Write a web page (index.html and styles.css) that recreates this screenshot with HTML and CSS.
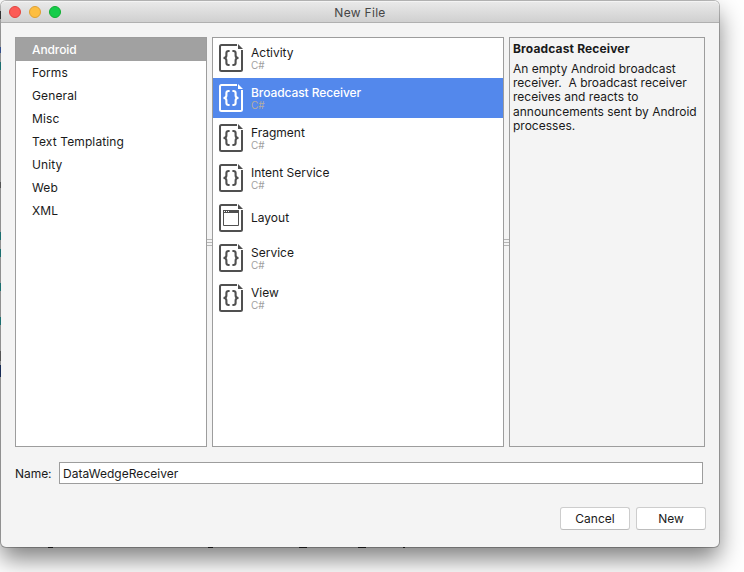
FILE: index.html
```
<!DOCTYPE html>
<html lang="en">
<head>
<meta charset="utf-8">
<title>New File</title>
<link rel="stylesheet" href="styles.css">
</head>
<body>
<svg class="symbols" aria-hidden="true">
  <symbol id="file" viewBox="0 0 24 28">
    <path d="M18 1H2.500Q1 1 1 2.500V25.500Q1 27 2.500 27H21.500Q23 27 23 25.500V6" fill="none" stroke="currentColor" stroke-width="2"/>
    <path d="M19 0L24 5H19Z" fill="currentColor"/>
  </symbol>
  <symbol id="code" viewBox="0 0 24 28">
    <use href="#file"/>
    <path d="M10.600 7H9.600Q7.400 7 7.400 9V11.500Q7.400 14 4.500 14Q7.400 14 7.400 16.500V19Q7.400 21 9.600 21H10.600M13.400 7H14.400Q16.600 7 16.600 9V11.500Q16.600 14 19.500 14Q16.600 14 16.600 16.500V19Q16.600 21 14.400 21H13.400" fill="none" stroke="currentColor" stroke-width="2.100"/>
  </symbol>
  <symbol id="layout" viewBox="0 0 24 28">
    <use href="#file"/>
    <path d="M4.500 6.500H19.500V21.500H4.500Z" fill="none" stroke="currentColor"/>
    <path d="M4 6H20V9H4Z" fill="currentColor"/>
    <path d="M5 7H6V8H5ZM7 7H8V8H7ZM9 7H10V8H9Z" fill="#fff"/>
  </symbol>
</svg>
<div class="backdrop">
  <i class="speck s1"></i><i class="speck s2"></i><i class="speck s3"></i><i class="speck s4"></i><i class="speck s5"></i><i class="speck s6"></i><i class="speck s7"></i><i class="speck s8"></i><i class="speck s9"></i><i class="speck s10"></i>
  <i class="dash d1"></i><i class="dash d2"></i><i class="dash d3"></i><i class="dash d4"></i><i class="dash d5"></i>
</div>
<main class="window">
  <header class="titlebar">
    <div class="lights"><span class="light red"></span><span class="light yellow"></span><span class="light green"></span></div>
    <span class="title">New File</span>
  </header>
  <div class="panes">
    <ul class="pane categories">
      <li class="active">Android</li>
      <li>Forms</li><li>General</li><li>Misc</li><li>Text Templating</li><li>Unity</li><li>Web</li><li>XML</li>
    </ul>
    <div class="splitter"><i></i></div>
    <ul class="pane templates">
      <li><svg><use href="#code"/></svg><div><b>Activity</b><small>C#</small></div></li>
      <li class="active"><svg><use href="#code"/></svg><div><b>Broadcast Receiver</b><small>C#</small></div></li>
      <li><svg><use href="#code"/></svg><div><b>Fragment</b><small>C#</small></div></li>
      <li><svg><use href="#code"/></svg><div><b>Intent Service</b><small>C#</small></div></li>
      <li><svg><use href="#layout"/></svg><div><b>Layout</b></div></li>
      <li><svg><use href="#code"/></svg><div><b>Service</b><small>C#</small></div></li>
      <li><svg><use href="#code"/></svg><div><b>View</b><small>C#</small></div></li>
    </ul>
    <div class="splitter"><i></i></div>
    <section class="pane details">
      <h2>Broadcast Receiver</h2>
      <p>An empty Android broadcast<br>receiver.&nbsp; A broadcast receiver<br>receives and reacts to<br>announcements sent by Android<br>processes.</p>
    </section>
  </div>
  <div class="name-row"><span class="label">Name:</span><div class="field">DataWedgeReceiver</div></div>
  <footer class="actions"><button>Cancel</button><button>New</button></footer>
</main>
</body>
</html>
```
FILE: styles.css
```
* { box-sizing: border-box; }
body {
  margin: 0; width: 744px; height: 572px; overflow: hidden; position: relative;
  background: #fff; color: #1a1a1a;
  font: 12px/16px Inter, "Liberation Sans", sans-serif;
  letter-spacing: 0.12px;
}
.symbols { position: absolute; width: 0; height: 0; }
ul { list-style: none; margin: 0; padding: 0; }
.window {
  position: relative; width: 718px; height: 546px; margin: 1px 0 0 1px;
  background: #f4f4f4; border-radius: 5px; display: flex; flex-direction: column;
  box-shadow: 0 0 0 1px rgba(0,0,0,.25), 0 12px 24px rgba(0,0,0,.5);
}
.titlebar {
  height: 22px; flex: none; display: flex; align-items: center;
  background: linear-gradient(#e9e9e9, #d0d0d0); border-bottom: 1px solid #b0b0b0;
  border-top: 1px solid #f4f4f4; border-radius: 5px 5px 0 0;
}
.lights { display: flex; gap: 8px; padding-left: 8px; width: 100px; }
.light { width: 12px; height: 12px; border-radius: 50%; border: 1px solid; }
.red { background: #fc5b57; border-color: #e2443f; }
.yellow { background: #fdbe41; border-color: #dfa032; }
.green { background: #15cc4a; border-color: #10ad31; }
.title { width: 518px; text-align: center; color: #464646; letter-spacing: .3px; padding-top: 1px; }
.panes { display: flex; margin: 14px 0 0 14px; height: 410px; width: 690px; flex: none; }
.pane { border: 1px solid #9d9d9d; background: #fff; }
.categories { width: 192px; }
.categories li { height: 23px; padding-left: 16px; line-height: 24px; }
.categories .active { background: #a1a1a1; color: #fff; font-weight: 500; letter-spacing: -.1px; }
.splitter { width: 5px; display: flex; align-items: center; }
.splitter i { width: 5px; height: 7px; background: repeating-linear-gradient(#b5b5b5 0 1px, #f4f4f4 1px 3px); }
.templates { width: 292px; letter-spacing: 0; }
.templates li { height: 40px; padding-left: 6px; display: flex; align-items: center; gap: 8px; }
.templates li div { padding-bottom: 2px; }
.templates svg { width: 24px; height: 28px; color: #505050; flex: none; }
.templates b { display: block; font-weight: 400; line-height: 15px; }
.templates small { display: block; font-size: 10px; line-height: 10px; color: #a0a0a0; }
.templates .active { background: #5388ec; color: #fff; }
.templates .active svg { color: #fff; }
.templates .active b { font-weight: 500; letter-spacing: -.08px; }
.templates .active small { color: #b5ae9f; }
.details { width: 196px; background: #f4f4f4; padding: 3px; }
.details h2 { font-size: 12px; line-height: 16px; margin: 0 0 5px; font-weight: 700; letter-spacing: .15px; }
.details p { margin: 0; line-height: 14.2px; white-space: nowrap; letter-spacing: 0; }
.name-row { display: flex; align-items: center; margin: 15px 16px 0 14px; height: 22px; flex: none; }
.label { width: 44px; padding-top: 2px; letter-spacing: -.05px; }
.field { width: 644px; height: 22px; border: 1px solid #9d9d9d; background: #fff; padding-left: 3px; line-height: 21px; letter-spacing: .04px; }
.actions { display: flex; justify-content: flex-end; gap: 6px; margin: 23px 13px 0 0; }
button {
  width: 70px; height: 23px; padding: 0; font: inherit; letter-spacing: 0; color: #1a1a1a;
  background: #fff; border: 1px solid #cdcdcd; border-bottom-color: #bdbdbd; border-radius: 3px;
}
.speck { position: absolute; left: 0; width: 1px; height: 3px; background: #1b6f70; z-index: 2; }
.s1 { top: 47px; background: #334f8b; height: 6px; }
.s2 { top: 62px; height: 8px; }
.s3 { top: 232px; height: 8px; }
.s4 { top: 249px; height: 8px; }
.s5 { top: 283px; height: 8px; }
.s6 { top: 317px; height: 8px; }
.s7 { top: 365px; background: #172b55; height: 12px; }
.s8 { top: 11px; background: #333; height: 8px; }
.s9 { top: 351px; background: #555; height: 10px; }
.s10 { top: 182px; background: #555; height: 6px; }
.dash { position: absolute; top: 547px; height: 1px; width: 5px; background: #151515; z-index: 2; }
.d1 { left: 48px; }
.d2 { left: 208px; }
.d3 { left: 299px; width: 8px; }
.d4 { left: 358px; width: 8px; }
.d5 { left: 403px; width: 2px; }
```
